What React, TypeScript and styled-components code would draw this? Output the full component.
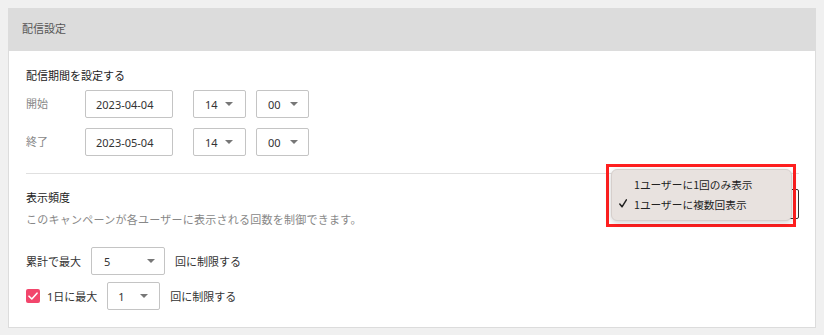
import React from "react";
import styled, { createGlobalStyle } from "styled-components";

const Global = createGlobalStyle`
  html, body { margin: 0; padding: 0; background: #f0f0f0; }
  body {
    font-family: "Noto Sans", "Noto Sans CJK JP", sans-serif;
    font-size: 11px;
    color: #333;
  }
  * { box-sizing: border-box; }
`;

const Page = styled.div`
  padding: 8px 8px 8px 8px;
  width: 824px;
  height: 335px;
`;

const Card = styled.div`
  position: relative;
  background: #fff;
  border: 1px solid #dcdcdc;
  height: 320px;
`;

const Header = styled.div`
  height: 42px;
  background: #dcdcdc;
  color: #555;
  padding-left: 13px;
  line-height: 40px;
  font-size: 11px;
`;

const Body = styled.div`
  padding: 17px 16px 0 17px;
`;

const Title = styled.div`
  font-size: 11px;
  line-height: 16px;
  color: #222;
`;

const Rows = styled.div`
  display: flex;
  flex-direction: column;
  gap: 10px;
  margin-top: 6px;
`;

const Row = styled.div<{ $gap?: number }>`
  display: flex;
  align-items: center;
  gap: ${(p) => p.$gap ?? 10}px;
`;

const Label = styled.div`
  width: 59px;
  color: #888;
  line-height: 28px;
`;

const TextBox = styled.div<{ $w: number }>`
  width: ${(p) => p.$w}px;
  height: 28px;
  border: 1px solid #c4c4c4;
  border-radius: 2px;
  padding-left: 10px;
  display: flex;
  align-items: center;
  color: #333;
  margin-right: 10px;
`;

const SelectBox = styled.div<{ $w: number; $h?: number; $pl?: number; $pr?: number; $dark?: boolean }>`
  width: ${(p) => p.$w}px;
  height: ${(p) => p.$h ?? 28}px;
  border: 1px solid ${(p) => (p.$dark ? "#333" : "#c4c4c4")};
  border-radius: 2px;
  padding: 0 ${(p) => p.$pr ?? 12}px 0 ${(p) => p.$pl ?? 11}px;
  display: flex;
  align-items: center;
  justify-content: space-between;
  color: #333;
  background: #fff;
`;

const Caret = styled.span`
  width: 0;
  height: 0;
  border-left: 4px solid transparent;
  border-right: 4px solid transparent;
  border-top: 4px solid #777;
`;

const Divider = styled.div`
  height: 1px;
  background: #e0e0e0;
  margin: 17px 0 16px;
`;

const FreqHead = styled.div`
  display: flex;
  justify-content: space-between;
  align-items: flex-start;
`;

const Desc = styled.div`
  color: #888;
  line-height: 16px;
  margin-top: 6px;
  letter-spacing: 0.25px;
`;

const FreqSelectWrap = styled.div`
  margin-top: -1px;
`;

const LimitRows = styled.div`
  display: flex;
  flex-direction: column;
  gap: 7px;
  margin-top: 19px;
`;

const Text = styled.span`
  color: #333;
  white-space: nowrap;
`;

const Check = styled.span`
  width: 14px;
  height: 14px;
  border-radius: 2px;
  background: #f2466c;
  display: inline-flex;
  align-items: center;
  justify-content: center;
  margin-right: -3px;
`;

const Annotation = styled.div`
  position: absolute;
  left: 597px;
  top: 155px;
  width: 190px;
  height: 63px;
  border: 3px solid #ff1f1f;
  padding: 2px 1px 0 2px;
`;

const Menu = styled.div`
  width: 181px;
  height: 52px;
  background: #e8e2df;
  border: 1px solid #d6cfcc;
  border-radius: 6px;
  box-shadow: 0 2px 6px rgba(0, 0, 0, 0.18);
  padding: 4px 0 0 0;
  font-family: "Noto Sans CJK JP", "Noto Sans", sans-serif;
`;

const MenuItem = styled.div`
  height: 20px;
  display: flex;
  align-items: center;
  padding-left: 22px;
  position: relative;
  color: #222;
  font-size: 10.7px;
`;

const MenuCheck = styled.span`
  position: absolute;
  left: 7px;
  top: 5px;
  display: flex;
`;

const Gap = styled.span`
  width: 10px;
`;

export default function App() {
  return (
    <>
      <Global />
      <Page>
        <Card>
          <Header>配信設定</Header>
          <Body>
            <Title>配信期間を設定する</Title>
            <Rows>
              <Row $gap={0}>
                <Label>開始</Label>
                <TextBox $w={88}>2023-04-04</TextBox>
                <Gap />
                <SelectBox $w={53} $pr={12}>14<Caret /></SelectBox>
                <Gap />
                <SelectBox $w={53} $pr={10}>00<Caret /></SelectBox>
              </Row>
              <Row $gap={0}>
                <Label>終了</Label>
                <TextBox $w={88}>2023-05-04</TextBox>
                <Gap />
                <SelectBox $w={53} $pr={12}>14<Caret /></SelectBox>
                <Gap />
                <SelectBox $w={53} $pr={10}>00<Caret /></SelectBox>
              </Row>
            </Rows>
            <Divider />
            <FreqHead>
              <div>
                <Title>表示頻度</Title>
                <Desc>このキャンペーンが各ユーザーに表示される回数を制御できます。</Desc>
              </div>
              <FreqSelectWrap>
                <SelectBox $w={140} $h={30} $dark />
              </FreqSelectWrap>
            </FreqHead>
            <LimitRows>
              <Row>
                <Text>累計で最大</Text>
                <SelectBox $w={74} $h={28} $pl={12} $pr={9}>5<Caret /></SelectBox>
                <Text>回に制限する</Text>
              </Row>
              <Row>
                <Check>
                  <svg width="10" height="8" viewBox="0 0 10 8">
                    <path d="M1 4.2 L3.8 7 L9 1.2" fill="none" stroke="#fff" strokeWidth="1.6" strokeLinecap="round" strokeLinejoin="round" />
                  </svg>
                </Check>
                <Text>1日に最大</Text>
                <SelectBox $w={53} $h={28} $pl={10} $pr={11}>1<Caret /></SelectBox>
                <Text>回に制限する</Text>
              </Row>
            </LimitRows>
          </Body>
          <Annotation>
            <Menu>
              <MenuItem>1ユーザーに1回のみ表示</MenuItem>
              <MenuItem>
                <MenuCheck>
                  <svg width="8" height="9" viewBox="0 0 8 9">
                    <path d="M0.8 5 L3 7.8 L7.4 0.8" fill="none" stroke="#222" strokeWidth="1.5" strokeLinecap="round" strokeLinejoin="round" />
                  </svg>
                </MenuCheck>
                1ユーザーに複数回表示
              </MenuItem>
            </Menu>
          </Annotation>
        </Card>
      </Page>
    </>
  );
}
